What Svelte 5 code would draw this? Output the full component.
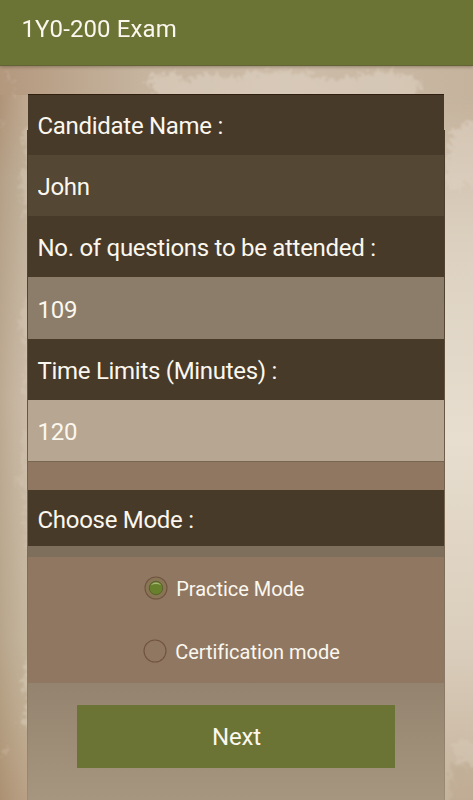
<script>
  let mode = $state('practice');
  const fields = [
    { id: 'name', label: 'Candidate Name :', value: 'John' },
    { id: 'count', label: 'No. of questions to be attended :', value: '109' },
    { id: 'time', label: 'Time Limits (Minutes) :', value: '120' }
  ];
  const modes = [
    { id: 'practice', label: 'Practice Mode' },
    { id: 'certification', label: 'Certification mode' }
  ];
</script>

<div class="screen">
  <svg class="paper" viewBox="0 0 473 800" aria-hidden="true">
    <defs>
      <linearGradient id="left" x2="0" y2="1">
        <stop offset="0" stop-color="#b7a087" />
        <stop offset=".25" stop-color="#bbaa93" />
        <stop offset=".5" stop-color="#c8b8a4" />
        <stop offset=".8" stop-color="#bfb097" />
        <stop offset=".9" stop-color="#b8a487" />
        <stop offset="1" stop-color="#af9375" />
      </linearGradient>
      <linearGradient id="right" x2="0" y2="1">
        <stop offset="0" stop-color="#c2b19c" />
        <stop offset=".16" stop-color="#cfbfab" />
        <stop offset=".32" stop-color="#ddd2c2" />
        <stop offset=".55" stop-color="#e7decf" />
        <stop offset=".82" stop-color="#d9ccba" />
        <stop offset="1" stop-color="#c5b39c" />
      </linearGradient>
      <linearGradient id="top">
        <stop offset="0" stop-color="#b3987d" />
        <stop offset=".3" stop-color="#c6b49f" />
        <stop offset=".6" stop-color="#cdbda9" />
        <stop offset="1" stop-color="#c5b39d" />
      </linearGradient>
      <linearGradient id="fade" x2="0" y2="1">
        <stop offset="0" stop-color="#fff" />
        <stop offset=".3" stop-color="#fff" />
        <stop offset="1" stop-color="#000" />
      </linearGradient>
      <mask id="topFade"><rect y="65" width="473" height="110" fill="url(#fade)" /></mask>
      <linearGradient id="edge">
        <stop offset="0" stop-color="#a58a6c" stop-opacity=".3" />
        <stop offset="1" stop-color="#d8cab8" stop-opacity=".25" />
      </linearGradient>
      <filter id="rough" x="-20%" y="-20%" width="140%" height="140%">
        <feTurbulence type="fractalNoise" baseFrequency=".2" numOctaves="4" seed="8" result="n" />
        <feDisplacementMap in="SourceGraphic" in2="n" scale="20" xChannelSelector="R" yChannelSelector="G" />
        <feGaussianBlur stdDeviation="1" />
      </filter>
    </defs>
    <rect width="240" height="800" fill="url(#left)" />
    <rect x="240" width="233" height="800" fill="url(#right)" />
    <rect y="65" width="473" height="110" fill="url(#top)" mask="url(#topFade)" />
    <rect y="95" width="28" height="705" fill="url(#edge)" />
    <g filter="url(#rough)" fill="#ddd1c1">
      <path opacity=".6" d="M147 75L176 71L185 82L200 74L239 78L250 71L302 72L330 80L360 76L382 71L408 75L422 85L412 100H158Z" />
      <path opacity=".6" d="M451 132L468 122L490 128V205L468 180L460 190H445Z" />
      <path opacity=".35" d="M22 130L34 125V235L25 212L20 178L27 160Z" />
      <path opacity=".3" d="M25 300H34V410L23 390L28 350L18 325Z" />
      <path opacity=".25" d="M23 430H34V570L25 540Z" />
      <path opacity=".5" d="M28 654H35V735L21 724L29 700L23 682Z" />
      <path opacity=".3" d="M6 76L13 75L12 80L6 81ZM12 90L17 91L14 97ZM1 120L6 124L2 128ZM15 480L22 478L18 488ZM4 745L9 750L4 755Z" />
      <path opacity=".3" d="M449 744L462 738L485 748V768L458 761Z" />
    </g>
    <path filter="url(#rough)" fill="#b9a48a" opacity=".4" d="M452 766L480 764V810H449Z" />
  </svg>

  <header>1Y0-200 Exam</header>

  <main>
    <form onsubmit={(e) => e.preventDefault()}>
      {#each fields as field}
        <label class="bar title" for={field.id}>{field.label}</label>
        <input class="bar {field.id}" id={field.id} value={field.value} />
      {/each}
      <div class="gap"></div>
      <div class="bar title choose">Choose Mode :</div>
      <div class="strip"></div>
      <div class="modes">
        {#each modes as item}
          <label class="mode {item.id}">
            <input type="radio" name="mode" value={item.id} bind:group={mode} />
            <svg width="24" height="24" viewBox="0 0 24 24" aria-hidden="true">
              <circle cx="12" cy="12" r="11" fill={mode === item.id ? '#887554' : 'none'} stroke="#70533f" stroke-width="1.1" />
              {#if mode === item.id}
                <circle cx="12" cy="12" r="6.7" fill="#66802b" stroke="#5c602b" stroke-width="1" />
                <path d="M6.8 9.2A6.2 6.2 0 0 1 17.2 9.2Q12 7 6.8 9.2Z" fill="#a8b67c" />
              {/if}
            </svg>
            <span>{item.label}</span>
          </label>
        {/each}
      </div>
      <div class="actions"><button type="submit">Next</button></div>
    </form>
  </main>
</div>

<style>
  :global(body) { margin: 0; }
  .screen {
    position: relative;
    box-sizing: border-box;
    width: 473px;
    height: 800px;
    overflow: hidden;
    display: flex;
    flex-direction: column;
    font-family: Roboto, "Liberation Sans", sans-serif;
    color: #fbf7ee;
    background: #cbbca8;
  }
  .paper { position: absolute; inset: 0; width: 473px; height: 800px; }
  header {
    position: relative;
    box-sizing: border-box;
    flex: none;
    height: 66px;
    padding: 14px 21px 0 21.5px;
    background: #6b7435;
    border-bottom: 1px solid #626435;
    box-shadow: 0 1px 3px #66523e88;
    font-size: 24px;
    line-height: 31px;
    letter-spacing: .1px;
  }
  main {
    position: relative;
    flex: 1;
    padding: 28px 28px 0;
    background: linear-gradient(#493b2a, #514331 160px, #75634e 360px, #8b7a65 570px, #a6967f) 27px 64px / 418px 100% no-repeat;
  }
  form { width: 416px; display: flex; flex-direction: column; }
  .bar {
    box-sizing: border-box;
    flex: none;
    display: block;
    width: 100%;
    height: 61.17px;
    margin: 0;
    padding: 3px 9.5px 0;
    border: 0;
    border-radius: 0;
    outline: 0;
    font: 24px/58px Roboto, "Liberation Sans", sans-serif;
    letter-spacing: -.29px;
    color: #fbf7ee;
    white-space: nowrap;
  }
  .title { background: #483a29; }
  .title:first-child { border-top: 1px solid #301e10; padding-top: 2px; }
  .name { background: #544733; }
  .count { background: #8b7d69; }
  .time { background: #b7a691; }
  .gap { height: 29px; background: #907762; box-sizing: border-box; border-top: 1px solid #776650; }
  .choose { height: 56px; line-height: 54px; }
  .strip { height: 11px; background: #7e6e5c; }
  .modes { height: 126px; display: flex; flex-direction: column; background: #907762; }
  .mode {
    display: flex;
    align-items: center;
    height: 63px;
    padding-left: 114.5px;
    font-size: 20px;
    line-height: 24px;
    letter-spacing: -.03px;
  }
  .practice { padding-left: 115.5px; }
  .mode input { appearance: none; width: 0; height: 0; margin: 0; }
  .mode svg { flex: none; }
  .mode span { padding-left: 8.7px; padding-top: 1px; }
  .actions {
    height: 117px;
    padding: 22px 49px 0;
    box-sizing: border-box;
    background: linear-gradient(#94846f, #a6967f);
  }
  button {
    display: block;
    width: 318px;
    height: 63px;
    padding: 2px 0 0 1px;
    border: 0;
    background: #6b7435;
    color: #fbf7ee;
    font: 24px/60px Roboto, "Liberation Sans", sans-serif;
    letter-spacing: -.1px;
  }
</style>
